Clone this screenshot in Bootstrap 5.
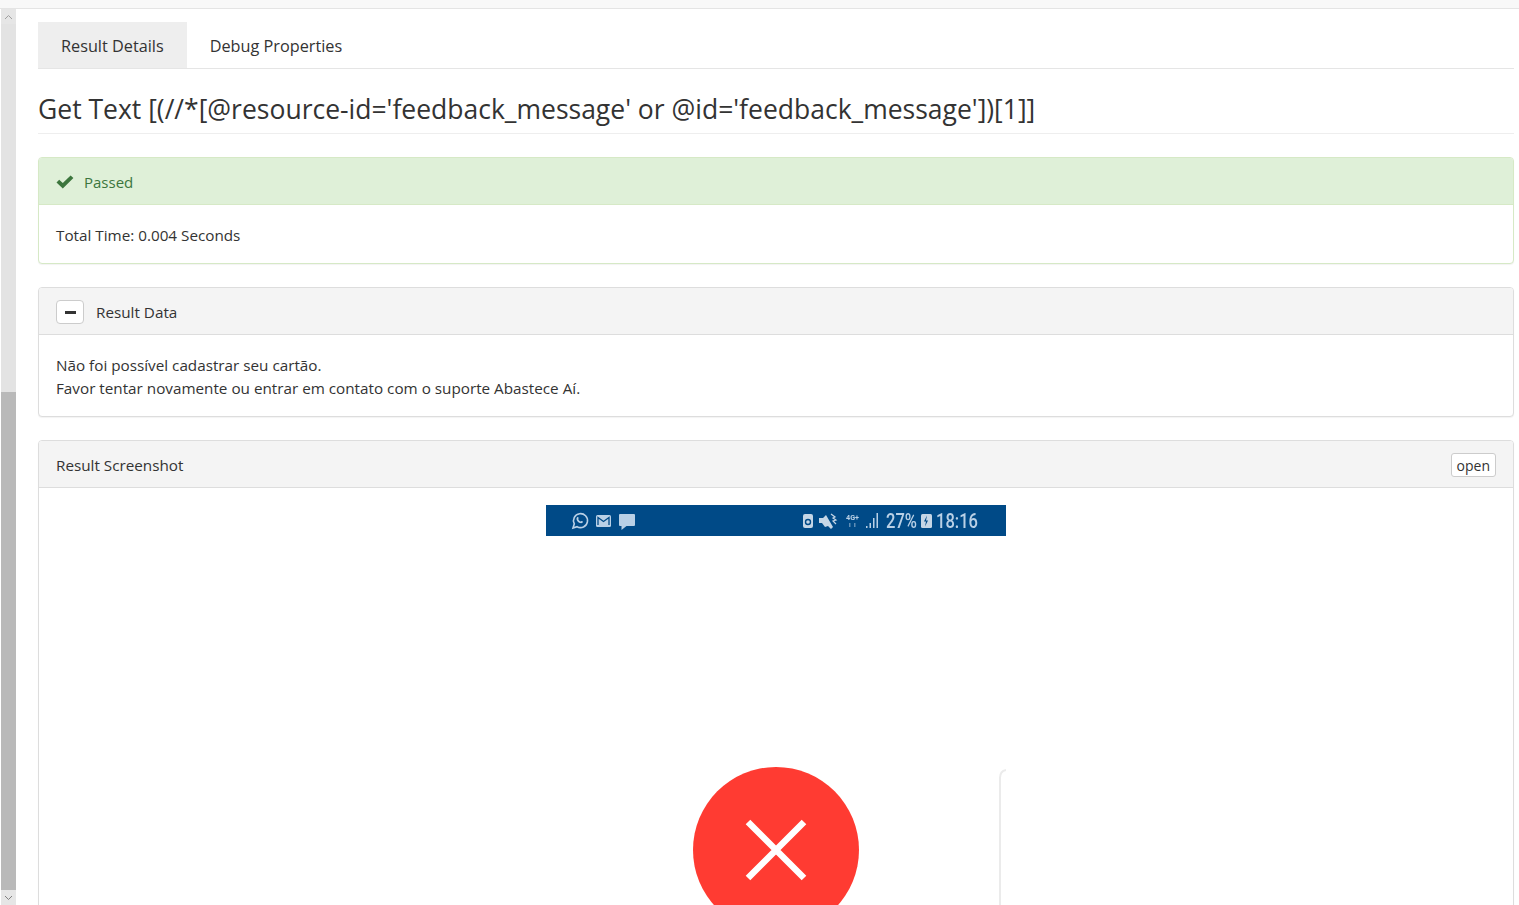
<!DOCTYPE html>
<html lang="pt">
<head>
<meta charset="utf-8">
<title>Result Details</title>
<link href="https://cdn.jsdelivr.net/npm/bootstrap@5.3.0/dist/css/bootstrap.min.css" rel="stylesheet">
<style>
html,body{height:905px;overflow:hidden;background:#fff}
body{font-family:"Open Sans","Noto Sans",sans-serif;font-size:15.26px;line-height:23px;color:#333}
.top-strip{height:9px;background:#f8f8f8;border-bottom:1px solid #e4e4e4}
.page-wrap{height:896px;overflow:hidden}
.fake-scroll{width:17px;padding-left:1px;flex:none;display:flex;flex-direction:column;background:#fff}
.fake-scroll .sb-btn{height:15px;background:#e6e6e6;width:15px;display:flex;align-items:center;justify-content:center;flex:none}
.fake-scroll .sb-track{height:368px;background:#e3e3e3;width:15px;flex:none}
.fake-scroll .sb-thumb{height:498px;background:#b9b9b9;width:15px;flex:none}
.main-col{margin-left:21px;width:1476px;flex:none;padding-top:13px}
.tabs-row{border-bottom:1px solid #e5e5e5;height:47px}
.tabs-row .nav-link{height:46px;padding:0 23px;line-height:48px;color:#333;border-radius:0;font-size:16.25px}
.tabs-row .nav-link.active{background:#eee;color:#333}
.title-h{font-family:inherit;font-size:26.5px;line-height:36px;font-weight:400;margin:0;padding:22px 0 6px;border-bottom:1px solid #eee;color:#333;height:65px}
.res-card{border:1px solid #ddd;border-radius:4px;box-shadow:0 1px 1px rgba(0,0,0,.05);--bs-card-bg:#fff}
.res-card .card-header{flex:none;height:47px;padding:2px 17px 0;background:#f4f4f4;border-bottom:1px solid #ddd;display:flex;align-items:center;border-radius:3px 3px 0 0}
.res-card .card-body{padding:19px 17px 0}
.card-ok{border-color:#d6e9c6;margin-top:23px;height:107px}
.card-ok .card-header{background:#dff0d8;border-bottom-color:#d6e9c6;color:#3c763d}
.card-data{margin-top:23px;height:130px}
.card-shot{margin-top:23px;height:600px}
.toggle-btn{width:28px;height:24px;padding:0;border:1px solid #ccc;border-radius:4px;background:#fff;margin-right:12px;display:flex;align-items:center;justify-content:center}
.toggle-btn span{display:block;width:11px;height:3px;background:#333}
.open-btn{margin-left:auto;height:24px;padding:0 5px;line-height:24px;font-size:14px;border:1px solid #ccc;border-radius:3px;background:#fff;color:#333}
.pass-label{margin-left:2px;font-size:15px}
.shot-body{padding:17px 0 0}
.shot-svg{display:block;margin:0 auto;width:460px;height:420px}
.shot-svg text{font-family:Roboto,sans-serif;fill:#b9d0e6}
</style>
</head>
<body>
<div class="top-strip"></div>
<div class="page-wrap d-flex">
  <div class="fake-scroll">
    <div class="sb-btn"><svg width="9" height="6" viewBox="0 0 9 6"><path d="M1 5 4.500 1.500 8 5" fill="none" stroke="#a0a0a0" stroke-width="1"/></svg></div>
    <div class="sb-track"></div>
    <div class="sb-thumb"></div>
    <div class="sb-btn"><svg width="9" height="6" viewBox="0 0 9 6"><path d="M1 1 4.500 4.500 8 1" fill="none" stroke="#808080" stroke-width="1"/></svg></div>
  </div>
  <div class="main-col">
    <ul class="nav tabs-row">
      <li class="nav-item"><a class="nav-link active" href="#">Result Details</a></li>
      <li class="nav-item"><a class="nav-link" href="#">Debug Properties</a></li>
    </ul>
    <h1 class="title-h">Get Text [(//*[@resource-id='feedback_message' or @id='feedback_message'])[1]]</h1>

    <div class="card res-card card-ok">
      <div class="card-header">
        <svg class="me-2" width="18" height="14" viewBox="0 0 18 14"><path d="M.5 7.500 3.200 4.800 6.800 8 14.600 .4 17.400 3.100 6.800 13.500Z" fill="#3c763d"/></svg>
        <span class="pass-label">Passed</span>
      </div>
      <div class="card-body">Total Time: 0.004 Seconds</div>
    </div>

    <div class="card res-card card-data">
      <div class="card-header">
        <button class="toggle-btn" type="button" aria-label="Collapse"><span></span></button>
        <span>Result Data</span>
      </div>
      <div class="card-body">Não foi possível cadastrar seu cartão.<br>Favor tentar novamente ou entrar em contato com o suporte Abastece Aí.</div>
    </div>

    <div class="card res-card card-shot">
      <div class="card-header">
        <span>Result Screenshot</span>
        <button class="open-btn" type="button">open</button>
      </div>
      <div class="shot-body">
        <svg class="shot-svg" viewBox="0 0 460 420">
          <defs><filter id="soft" x="-5%" y="-5%" width="110%" height="110%"><feGaussianBlur stdDeviation=".35"/></filter></defs>
          <rect width="460" height="31" fill="#004a87"/>
          <g filter="url(#soft)">
            <path d="M27 23l1.300-4.200a7 7 0 1 1 2.800 2.900Z" fill="none" stroke="#b9d0e6" stroke-width="1.600"/>
            <path d="M31 12.500c.6-.8 1.300-.6 1.600.3.2.6-.5 1-.2 1.600.5 1 1.200 1.600 2.100 2 .5.2.9-.6 1.500-.3.9.4 1.200 1 .5 1.700-2.500 2-7.600-2.800-5.500-5.300Z" fill="#b9d0e6"/>
            <rect x="50" y="10" width="15" height="12" rx="1.500" fill="#b9d0e6"/>
            <path d="M52 20v-7.500l5.500 4 5.500-4V20" fill="none" stroke="#004a87" stroke-width="1.300"/>
            <path d="M74 9h14a1 1 0 0 1 1 1v10a1 1 0 0 1-1 1h-7.500L75.500 25v-4H74a1 1 0 0 1-1-1V10a1 1 0 0 1 1-1Z" fill="#b9d0e6"/>
            <path d="M259 9h6a2 2 0 0 1 2 2v10a2 2 0 0 1-2 2h-6a2 2 0 0 1-2-2V11a2 2 0 0 1 2-2Z" fill="#c5d6e6"/>
            <circle cx="262" cy="17" r="2.500" fill="none" stroke="#004a87" stroke-width="1.400"/>
            <path d="M273 13h4l3-3 7 12-2 2-3-3-3 1-3-4h-3Z" fill="#c5d6e6"/>
            <path d="M285 9l4 3-2 1 3 2-3 1 3 3" fill="none" stroke="#c5d6e6" stroke-width="1.200"/>
            <text x="300" y="15" font-size="7" font-weight="700" textLength="13" lengthAdjust="spacingAndGlyphs">4G+</text>
            <path d="M303 18h1.500v4H303ZM308 18h1.500v4H308Z" fill="#5f8db5"/>
            <rect x="320" y="21" width="1.500" height="2" fill="#b9d0e6"/>
            <rect x="323.500" y="18" width="1.500" height="5" fill="#b9d0e6"/>
            <rect x="327" y="13" width="1.500" height="10" fill="#b9d0e6"/>
            <rect x="330.500" y="8" width="1.500" height="15" fill="#b9d0e6"/>
            <text x="340" y="23" font-size="19.500" font-weight="500" textLength="31" lengthAdjust="spacingAndGlyphs">27%</text>
            <rect x="375" y="9" width="11" height="14" rx="1.500" fill="#c5d6e6"/>
            <path d="M381 10.500l-3 6h2l-1 5 3-6h-2Z" fill="#004a87"/>
            <text x="390" y="23" font-size="19.500" font-weight="500" textLength="42" lengthAdjust="spacingAndGlyphs">18:16</text>
            <circle cx="230" cy="345" r="83" fill="#ff3b30"/>
            <path d="M202 317l56 56M258 317l-56 56" stroke="#fff" stroke-width="6.500"/>
            <path d="M460 265c-3 .5-6 3-6 8V420" fill="none" stroke="#ebebeb" stroke-width="2"/>
          </g>
        </svg>
      </div>
    </div>
  </div>
</div>
</body>
</html>
